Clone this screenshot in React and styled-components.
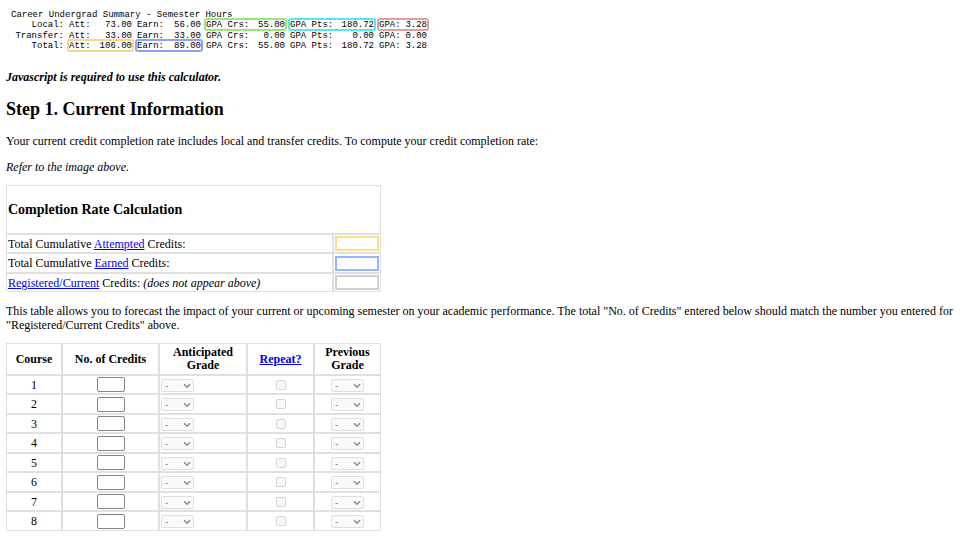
import React from "react";
import styled, { createGlobalStyle } from "styled-components";

const transcript = [
  {
    label: "Local:",
    cells: [
      ["Att:", "73.00"],
      ["Earn:", "56.00"],
      ["GPA Crs:", "55.00", "#98e878"],
      ["GPA Pts:", "180.72", "#4fe9f2"],
      ["GPA:", "3.28", "#e0a0a0"],
    ],
  },
  {
    label: "Transfer:",
    cells: [
      ["Att:", "33.00"],
      ["Earn:", "33.00"],
      ["GPA Crs:", "0.00"],
      ["GPA Pts:", "0.00"],
      ["GPA:", "0.00"],
    ],
  },
  {
    label: "Total:",
    cells: [
      ["Att:", "106.00", "#fbd584"],
      ["Earn:", "89.00", "#88a4fa"],
      ["GPA Crs:", "55.00"],
      ["GPA Pts:", "180.72"],
      ["GPA:", "3.28"],
    ],
  },
];

const courses = [1, 2, 3, 4, 5, 6, 7, 8];

function TranscriptSummary() {
  return (
    <Transcript>
      <caption>Career Undergrad Summary - Semester Hours</caption>
      <colgroup>
        <Col width={53} />
        <Col width={63} />
        <Col width={64} />
        <Col width={79} />
        <Col width={84} />
        <Col width={48} />
      </colgroup>
      <tbody>
        {transcript.map((row) => (
          <tr key={row.label}>
            <th scope="row">{row.label}</th>
            {row.cells.map(([name, value, color]) => (
              <TranscriptCell key={name} color={color}>
                <Pair>
                  <span>{name}</span>
                  <span>{value}</span>
                </Pair>
              </TranscriptCell>
            ))}
          </tr>
        ))}
      </tbody>
    </Transcript>
  );
}

function GradeSelect({ label, centered }) {
  return (
    <SelectWrapper $centered={centered}>
      <Select aria-label={label} disabled defaultValue="-">
        <option>-</option>
        <option>A</option>
        <option>B</option>
        <option>C</option>
        <option>D</option>
        <option>F</option>
      </Select>
      <Chevron viewBox="0 0 8 6" aria-hidden="true">
        <path d="M1 1.2 L4 4.2 L7 1.2" />
      </Chevron>
    </SelectWrapper>
  );
}

function App() {
  return (
    <Page>
      <GlobalStyle />
      <TranscriptSummary />
      <Text>
        <strong>
          <em>Javascript is required to use this calculator.</em>
        </strong>
      </Text>
      <Heading>Step 1. Current Information</Heading>
      <Text>
        Your current credit completion rate includes local and transfer credits.
        To compute your credit completion rate:
      </Text>
      <Text>
        <em>Refer to the image above.</em>
      </Text>

      <Table>
        <colgroup>
          <col />
          <Col width={48} />
        </colgroup>
        <thead>
          <tr>
            <TitleCell colSpan={2}>
              <TableTitle>Completion Rate Calculation</TableTitle>
            </TitleCell>
          </tr>
        </thead>
        <tbody>
          <Row>
            <Cell>
              <label htmlFor="attempted">Total Cumulative </label>
              <Link href="#attempted">Attempted</Link> Credits:
            </Cell>
            <Cell>
              <TotalInput id="attempted" color="#fddc8c" />
            </Cell>
          </Row>
          <Row>
            <Cell>
              <label htmlFor="earned">Total Cumulative </label>
              <Link href="#earned">Earned</Link> Credits:
            </Cell>
            <Cell>
              <TotalInput id="earned" color="#98b2fc" />
            </Cell>
          </Row>
          <Row>
            <Cell>
              <Link href="#registered">Registered/Current</Link>
              <label htmlFor="registered">
                {" "}
                Credits: <em>(does not appear above)</em>
              </label>
            </Cell>
            <Cell>
              <TotalInput id="registered" color="#d0d0d0" />
            </Cell>
          </Row>
        </tbody>
      </Table>

      <Text>
        This table allows you to forecast the impact of your current or upcoming
        semester on your academic performance. The total "No. of Credits"
        entered below should match the number you entered for
        "Registered/Current Credits" above.
      </Text>

      <Table>
        <colgroup>
          <Col width={56} />
          <Col width={97} />
          <Col width={88} />
          <Col width={67} />
          <Col width={67} />
        </colgroup>
        <thead>
          <tr>
            <HeadCell scope="col">Course</HeadCell>
            <HeadCell scope="col">No. of Credits</HeadCell>
            <HeadCell scope="col">
              Anticipated
              <br />
              Grade
            </HeadCell>
            <HeadCell scope="col">
              <Link href="#repeat">Repeat?</Link>
            </HeadCell>
            <HeadCell scope="col">
              Previous
              <br />
              Grade
            </HeadCell>
          </tr>
        </thead>
        <tbody>
          {courses.map((n) => (
            <Row key={n}>
              <Cell align="center">{n}</Cell>
              <Cell align="center">
                <CreditInput aria-label={`Course ${n} credits`} />
              </Cell>
              <Cell>
                <GradeSelect label={`Course ${n} anticipated grade`} />
              </Cell>
              <Cell align="center">
                <Checkbox
                  type="checkbox"
                  aria-label={`Repeat course ${n}`}
                  disabled
                />
              </Cell>
              <Cell align="center">
                <GradeSelect label={`Course ${n} previous grade`} centered />
              </Cell>
            </Row>
          ))}
        </tbody>
      </Table>
    </Page>
  );
}

export default App;

const GlobalStyle = createGlobalStyle`
  * {
    box-sizing: border-box;
  }

  body {
    margin: 0;
    background-color: #fff;
  }
`;

const Page = styled.main`
  padding: 10px 6px 0;
  font-family: "Liberation Serif", "Times New Roman", serif;
  font-size: 12px;
  line-height: 14px;
  color: #000;
`;

const Col = styled.col`
  width: ${(props) => props.width}px;
`;

const Transcript = styled.table`
  table-layout: fixed;
  width: 426px;
  margin-bottom: 19px;
  border-spacing: 5px 1px;
  font-family: "Liberation Mono", "Courier New", monospace;
  font-size: 9px;
  line-height: 8px;

  caption {
    padding: 1px 0 0 5px;
    text-align: left;
    white-space: nowrap;
  }

  th {
    padding: 1px 0 0;
    font-weight: normal;
    text-align: right;
  }

  tr:nth-child(2) {
    height: 10px;
  }
`;

const TranscriptCell = styled.td`
  padding: 1px 0 0;
  border-radius: 1px;
  outline: ${(props) => (props.color ? `2px solid ${props.color}` : "none")};
`;

const Pair = styled.div`
  display: flex;
  justify-content: space-between;
  white-space: nowrap;
`;

const Text = styled.p`
  margin: 12px 0 11px;
`;

const Heading = styled.h2`
  margin: 15px 0;
  font-size: 18px;
  line-height: 20px;
`;

const Table = styled.table`
  table-layout: fixed;
  width: 375px;
  max-width: 100%;
  margin: 11px 0;
  border-spacing: 0;
`;

const Row = styled.tr`
  height: 19px;

  &:nth-child(even) {
    height: 20px;
  }
`;

const Cell = styled.td`
  padding: 1px;
  border: 1px solid #e0e0e0;
  text-align: ${(props) => props.align || "left"};
  vertical-align: middle;
`;

const HeadCell = styled.th`
  height: 32px;
  padding: 1px;
  border: 1px solid #e0e0e0;
  line-height: 13px;
`;

const TitleCell = styled.th`
  height: 49px;
  padding: 1px;
  border: 1px solid #e0e0e0;
  text-align: left;
`;

const TableTitle = styled.h3`
  margin: 0;
  font-size: 14px;
  line-height: 16px;
`;

const Link = styled.a`
  color: #0000ee;
  text-decoration: underline;
`;

const TotalInput = styled.input`
  display: block;
  width: 100%;
  height: 15px;
  padding: 0 1px;
  border: 2px solid ${(props) => props.color};
  font-size: 10px;
`;

const CreditInput = styled.input`
  display: block;
  width: 28px;
  height: 15px;
  margin: 0 auto;
  padding: 0 1px;
  border: 1px solid #858585;
  border-radius: 2px;
  font-size: 10px;
`;

const SelectWrapper = styled.div`
  position: relative;
  width: 33px;
  margin: ${(props) => (props.$centered ? "1px auto 0" : "1px 0 0")};
`;

const Select = styled.select`
  appearance: none;
  display: block;
  width: 100%;
  height: 13px;
  padding: 0 3px;
  border: 1px solid #dedede;
  border-radius: 2px;
  background-color: #fafafa;
  color: #8a8a8a;
  font-family: "Liberation Sans", Arial, sans-serif;
  font-size: 10px;
  line-height: 11px;
  opacity: 1;
`;

const Chevron = styled.svg`
  position: absolute;
  top: 4px;
  right: 3px;
  width: 8px;
  height: 6px;
  fill: none;
  stroke: #8a8a8a;
  stroke-width: 1.5;
  pointer-events: none;
`;

const Checkbox = styled.input`
  appearance: none;
  display: block;
  width: 10px;
  height: 10px;
  margin: 0 auto;
  border: 1px solid #d4d4d4;
  border-radius: 2px;
  background-color: #f9f9f9;
`;
